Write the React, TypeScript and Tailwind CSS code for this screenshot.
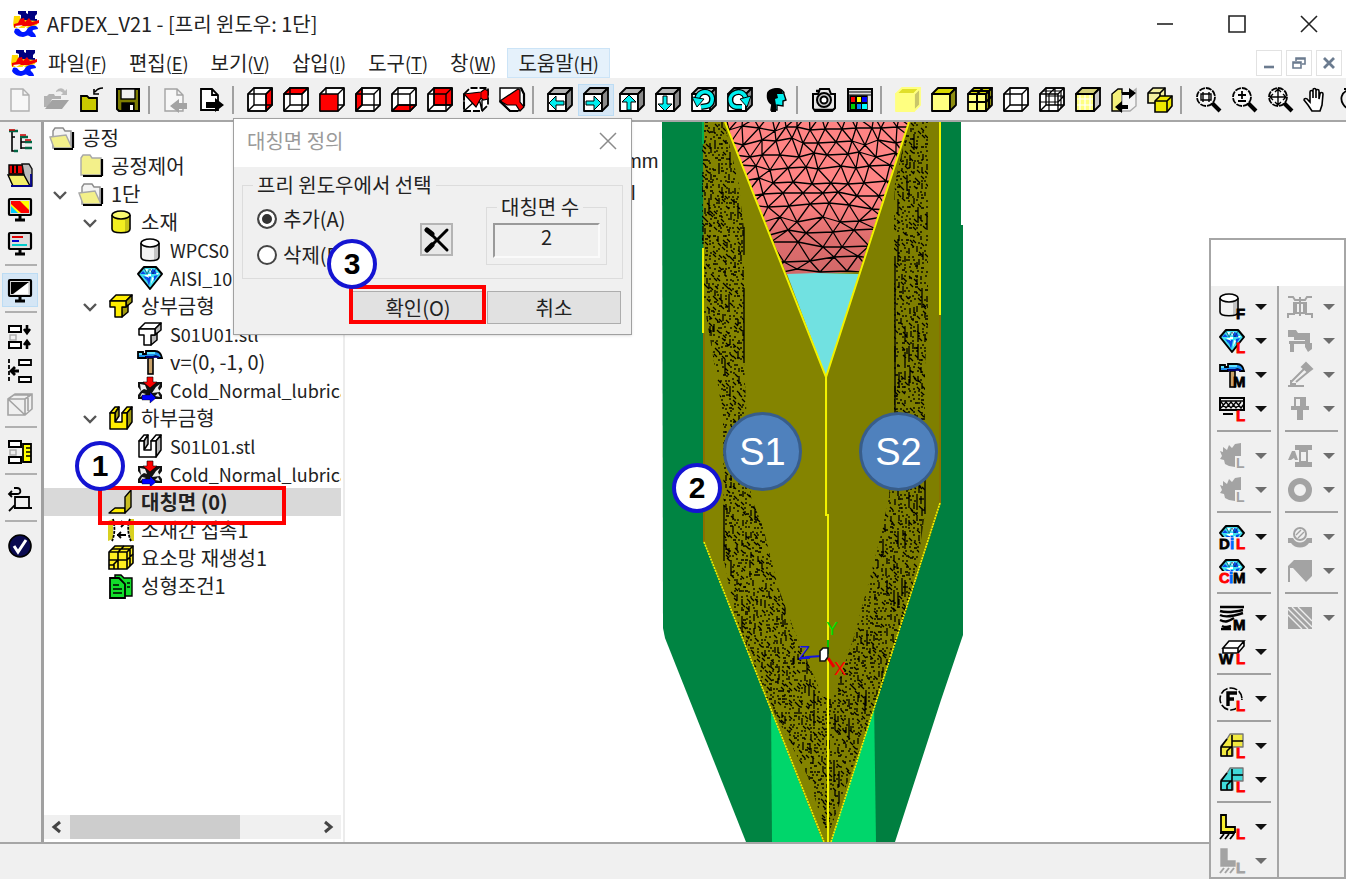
import { FC, ReactNode, useState } from "react";

type IconProps = {
    children: ReactNode;
    size?: number;
}

const Icon: FC<IconProps> = ({ children, size = 26 }) => (
    <svg width={size} height={size} viewBox="0 0 26 26" fill="none" stroke="#000" strokeWidth="1.4" className="shrink-0 overflow-visible" aria-hidden="true">
        {children}
    </svg>
);

type FaceName = "front" | "back" | "left" | "right" | "top" | "bottom";

const FACES: Record<FaceName, string> = {
    front: "1,7 19,7 19,24 1,24",
    back: "7,1 25,1 25,18 7,18",
    left: "1,7 7,1 7,18 1,24",
    right: "19,7 25,1 25,18 19,24",
    top: "1,7 7,1 25,1 19,7",
    bottom: "1,24 7,18 25,18 19,24",
};

const WireCube: FC<{ red?: FaceName }> = ({ red }) => (
    <g strokeLinejoin="round">
        <polygon points="1,7 7,1 25,1 25,18 19,24 1,24" fill="#fff" />
        {red && red !== "front" && <polygon points={FACES[red]} fill="#f00" />}
        <polygon points={FACES.back} />
        <path d="M1 24l6-6" />
        <polygon points={FACES.front} fill={red === "front" ? "#f00" : "none"} />
        <path d="M1 7l6-6M19 7l6-6M19 24l6-6" />
    </g>
);

const SolidCube: FC<{ front: string; top: string; side: string; line?: string }> = ({ front, top, side, line = "#000" }) => (
    <g stroke={line} strokeWidth="1.8" strokeLinejoin="round">
        <polygon points={FACES.front} fill={front} />
        <polygon points={FACES.top} fill={top} />
        <polygon points={FACES.right} fill={side} />
    </g>
);

const ViewCube: FC<{ children: ReactNode }> = ({ children }) => (
    <>
        <SolidCube front="#fff" top="#b5b5b5" side="#8a8a8a" />
        {children}
    </>
);

const Tag: FC<{ x: number; color?: string; children: string }> = ({ x, color = "#000", children }) => (
    <text x={x} y="25" fill={color} stroke={color} strokeWidth="0.8" className="font-['Liberation_Sans',sans-serif] text-[15px] font-bold">
        {children}
    </text>
);

const Diamond = () => (
    <g strokeLinejoin="round">
        <polygon points="7,2 19,2 25,9 13,24 1,9" fill="#3fe0f0" strokeWidth="2" />
        <path d="M3 9l3-3 3 3zM15 4l3 1 2 4h-6zM12 21l-3-9 5 0zM17 11l4-1-4 6zM6 11l3 1 1 4z" fill="#0b49e8" stroke="none" />
        <path d="M8 4h3l-1 3zM12 4h3l-2 4zM7 10h4l1 3zM15 12l2 1-3 6zM19 8l3 0-2 2zM11 9h3v2h-3z" fill="#fff" stroke="none" />
        <path d="M7 3l3 6 3-5 3 5 3-6" stroke="#024" strokeWidth="0.6" />
    </g>
);

const Hammer = () => (
    <g>
        <rect x="11" y="9" width="5" height="16" fill="#c9a26a" strokeWidth="1.6" />
        <path d="M1 3h5v2h3V2h9c4 0 6 2 7 7h-4c-1-2-3-2-5-1H9v1H1z" fill="#1c8ff0" strokeWidth="1.8" />
        <path d="M10 4h8M2 5h3" stroke="#7ff" strokeWidth="1.6" />
        <path d="M9 8h8l5 0" stroke="#008" strokeWidth="1.6" />
    </g>
);

const Cylinder: FC<{ fill: string; top: string }> = ({ fill, top }) => (
    <g strokeWidth="1.6">
        <path d="M4 6v14c0 5 18 5 18 0V6" fill={fill} />
        <path d="M17 10v13l4-2V9z" fill="#00000030" stroke="none" />
        <ellipse cx="13" cy="6" rx="9" ry="4" fill={top} />
    </g>
);

const FolderOpen = () => (
    <g>
        <path d="M4 6l2-3h8l2 3h6v17H4z" fill="#f4f4f4" stroke="#8c8c8c" />
        <path d="M1 12l16-2 6 13H5z" fill="#f3f08a" stroke="#a8a8a8" />
        <path d="M24 7v16M5 24h19" strokeWidth="2.2" />
    </g>
);

const FolderClosed = () => (
    <g>
        <path d="M3 5l2-3h7l2 3h9v17H3z" fill="#f3f08a" stroke="#a8a8a8" />
        <path d="M24 6v17M5 23h19" strokeWidth="2.2" />
    </g>
);

const UpperDie: FC<{ fill: string; side: string }> = ({ fill, side }) => (
    <g strokeWidth="1.5" strokeLinejoin="round">
        <path d="M2 8l6-6h16l-6 6z" fill={fill} />
        <path d="M18 8l6-6v7l-6 5z" fill={side} />
        <path d="M13 14h5l2-2v7l-6 5z" fill={side} />
        <path d="M2 8h16v6h-4v10H7V14H2z" fill={fill} />
    </g>
);

const LowerDie: FC<{ fill: string; side: string }> = ({ fill, side }) => (
    <g strokeWidth="1.5" strokeLinejoin="round">
        <path d="M2 8l5-6h4l-4 6zM14 8l5-6h5l-5 6z" fill={fill} />
        <path d="M7 8l4-6v9l-4 6zM19 8l5-6v15l-5 7z" fill={side} />
        <path d="M2 8h5v9h7V8h5v16H2z" fill={fill} />
    </g>
);

const Friction = () => (
    <g>
        <path d="M1 5h24v5l-3 4 3 4v4H1v-4l3-4-3-4z" fill="#111" stroke="none" />
        <path d="M3 7l5 1 2 5-3-1-3 2zM23 7l-4 3-4 6 8-1-2-4zM3 20l2-4 4 1zM23 20l-2-4-3 3z" fill="#eee" stroke="none" />
        <path d="M10 0h6v5h4l-7 6-7-6h4z" fill="#f00" strokeWidth="0.6" />
        <path d="M5 18h8v-3l6 6-6 5v-3H5z" fill="#00f" strokeWidth="0.4" />
    </g>
);

const Monitor: FC<{ children: ReactNode }> = ({ children }) => (
    <g>
        <rect x="2" y="3" width="22" height="16" rx="1" fill="#ddd" strokeWidth="2.2" />
        {children}
        <path d="M13 19v4M8 24h10" strokeWidth="3" />
    </g>
);

const Logo = () => (
    <g stroke="none">
        <path d="M5 0h8v2l2 1V0h9v3l-2 2v3h2v3H6V9l2-2V4L5 3z" fill="#000080" />
        <path d="M1 5h6l1 6 3-2 14 1-1 4-8 3H1l-1-3z" fill="#ffd900" />
        <path d="M7 8l4-1 1 4 4-4 3 4 7-2v3l-8 3H3l-2 2v-4l4-1z" fill="#f20000" />
        <path d="M2 18c5-2 5 4 9 3s2-5 8-6c4-1 6 1 6 3l-5 1c-2 2 3 3 3 7h-5c-5-3-3-1-8 0-5 0-8-3-9-5z" fill="#0017ff" />
        <path d="M12 16l3-1-4 4zM2 15l8-1-5 3z" fill="#fff" />
    </g>
);

const Magnifier: FC<{ children?: ReactNode }> = ({ children }) => (
    <g>
        <circle cx="11" cy="10" r="9" fill="#f7f7f7" strokeWidth="1.8" strokeDasharray="6 1" />
        <path d="M17 16l8 8" strokeWidth="4" />
        {children}
    </g>
);

const Blocks: FC<{ extra: ReactNode }> = ({ extra }) => (
    <g>
        <rect x="2" y="2" width="12" height="6" fill="#fff" strokeWidth="2" />
        <rect x="2" y="18" width="12" height="6" fill="#fff" strokeWidth="2" />
        {extra}
    </g>
);

const TransparentBlock = <rect x="3" y="11" width="6" height="5" stroke="#aaa" />;

const MeshLump: FC<{ fill: string }> = ({ fill }) => (
    <g strokeLinejoin="round">
        <path d="M2 23V13L8 6l3-5h13v13H14v9z" fill={fill} stroke="#777" />
        <path d="M2 23v-9h11v9zM8 6l-6 8M13 23V2M13 8h11M8 23v-5l5-5" strokeWidth="1.6" />
    </g>
);

const GRAY = "#a3a3a3";

const GrayGear = () => (
    <g stroke="none" fill={GRAY}>
        <path d="M1 8l3 1 0-5 4 3 2-5 3 3 3-4 6-1v13h-6v11l-6-1-4-2-1-4-4-1 2-3z" />
        <text x="17" y="25" className="font-['Liberation_Sans',sans-serif] text-[14px] font-bold">L</text>
    </g>
);

type Tool = {
    label: string;
    icon: ReactNode;
    active?: boolean;
}

const toolGroups: Tool[][] = [
    [
        { label: "새로 만들기", icon: <path d="M4 2h12l6 6v16H4zM16 2v6h6" fill="#f7f7f7" stroke="#b0b0b0" /> },
        {
            label: "열기",
            icon: (
                <g stroke="none" fill={GRAY}>
                    <path d="M1 9h3l2-2h5l1 2h6v3h-9L5 20H1z" opacity=".8" />
                    <path d="M9 13h17l-7 9H2z" />
                    <path d="M13 4c4-4 7-3 9 0l2-2v6h-6l2-2c-2-2-4-2-7-1z" opacity=".7" />
                </g>
            ),
        },
        {
            label: "닫기",
            icon: (
                <g>
                    <path d="M2 9h6l2 2h8v13H2z" fill="#c9c900" strokeWidth="1.8" />
                    <path d="M24 1c-4 0-6 1-8 4M15 2v5h5" strokeWidth="1.6" />
                </g>
            ),
        },
        {
            label: "저장",
            icon: (
                <g>
                    <path d="M2 2h22v22H4l-2-2z" fill="#7c7c00" strokeWidth="2" />
                    <rect x="6" y="2" width="14" height="10" fill="#f0f0f0" />
                    <rect x="7" y="16" width="12" height="8" fill="#000" />
                    <rect x="15" y="18" width="3" height="5" fill="#fff" stroke="none" />
                </g>
            ),
        },
    ],
    [
        {
            label: "가져오기",
            icon: (
                <g stroke={GRAY}>
                    <path d="M2 2h12l6 6v16H2zM14 2v6h6" fill="#f7f7f7" />
                    <path d="M24 16h-8v-4l-9 7 9 7v-4h8z" fill={GRAY} stroke="none" />
                </g>
            ),
        },
        {
            label: "내보내기",
            icon: (
                <g>
                    <path d="M2 2h11l6 6v15H2zM13 2v6h6" fill="#fff" strokeWidth="1.8" />
                    <path d="M7 15h9v-4l9 7-9 7v-4H7z" fill="#000" stroke="none" />
                </g>
            ),
        },
    ],
    [
        { label: "우측면", icon: <WireCube red="right" /> },
        { label: "윗면", icon: <WireCube red="top" /> },
        { label: "정면", icon: <WireCube red="front" /> },
        { label: "좌측면", icon: <WireCube red="left" /> },
        { label: "아랫면", icon: <WireCube red="bottom" /> },
        { label: "뒷면", icon: <WireCube red="back" /> },
        {
            label: "등각 보기",
            icon: (
                <g>
                    <path d="M1 7l6-6h18v17l-6 6H1z" fill="#fff" strokeDasharray="7 2" strokeWidth="1.8" />
                    <path d="M1 7v17M1 24l10-9h6l2 9M19 24V13" />
                    <path d="M1 7l17-2 4-3 3 2v8l-5 1-2-2-5 9z" fill="#f00" strokeWidth="1.2" />
                    <path d="M18 5v6" stroke="#800" />
                </g>
            ),
        },
        {
            label: "역등각 보기",
            icon: (
                <g>
                    <path d="M1 1h21l3 6v12l-6 5h-8L1 15z" fill="#fff" />
                    <path d="M19 2L1 14l7 4h9l4 6 4-4-4-5V3z" fill="#f00" strokeWidth="1.2" />
                    <path d="M1 14l10 10h8M22 1l3 6v12" strokeWidth="2.2" />
                </g>
            ),
        },
    ],
    [
        { label: "왼쪽으로", icon: <ViewCube><path d="M2 16l7-7v5h8v4H9v5z" fill="#0ee" strokeWidth="1" /></ViewCube> },
        { label: "오른쪽으로", active: true, icon: <ViewCube><path d="M18 16l-7-7v5H3v4h8v5z" fill="#0ee" strokeWidth="1" /></ViewCube> },
        { label: "위로", icon: <ViewCube><path d="M10 8l7 7h-5v8H8v-8H3z" fill="#0ee" strokeWidth="1" /></ViewCube> },
        { label: "아래로", icon: <ViewCube><path d="M10 24l7-7h-5V9H8v8H3z" fill="#0ee" strokeWidth="1" /></ViewCube> },
        {
            label: "반시계 회전",
            icon: (
                <ViewCube>
                    <path d="M6 12c1-6 7-9 12-6s4 12-2 13l-6 1" stroke="#000" strokeWidth="6" />
                    <path d="M6 12c1-6 7-9 12-6s4 12-2 13l-6 1" stroke="#0ee" strokeWidth="3.5" />
                    <path d="M1 10l12 2-7 8z" fill="#0ee" strokeWidth="1" />
                </ViewCube>
            ),
        },
        {
            label: "시계 회전",
            icon: (
                <ViewCube>
                    <path d="M19 11C17 5 11 3 6 7s-3 12 3 13h6" stroke="#000" strokeWidth="6" />
                    <path d="M19 11C17 5 11 3 6 7s-3 12 3 13h6" stroke="#0ee" strokeWidth="3.5" />
                    <path d="M24 9l-11 3 7 8z" fill="#0ee" strokeWidth="1" />
                </ViewCube>
            ),
        },
        {
            label: "시점",
            icon: (
                <g>
                    <path d="M12 2c6-1 9 2 9 5l2 6-3 1v5l-6-1v5H8l1-6z" fill="#0ee" />
                    <path d="M4 6c2-5 10-6 15-3l1 4h-6l1 4-3 1 1 6v7H8l1-7c-4-2-6-6-5-12z" fill="#000" stroke="none" />
                </g>
            ),
        },
    ],
    [
        {
            label: "화면 저장",
            icon: (
                <g>
                    <path d="M2 7h5l2-5h9l2 5h4v14l-3 3H4l-2-3z" fill="#e8e8e8" strokeWidth="2" />
                    <circle cx="13" cy="13" r="7" fill="#ccc" strokeWidth="2" />
                    <circle cx="13" cy="13" r="3.5" fill="#fff" strokeWidth="2" />
                    <path d="M4 23h18M5 4h4" strokeWidth="2.5" />
                </g>
            ),
        },
        {
            label: "색상",
            icon: (
                <g>
                    <rect x="1" y="2" width="24" height="22" fill="#ddd" strokeWidth="2" />
                    <path d="M2 5h22M2 8h22" strokeWidth="1.2" />
                    <rect x="3" y="9" width="17" height="14" fill="#000" />
                    <g stroke="none">
                        <path d="M4 10h4v5H4z" fill="#f00" />
                        <path d="M10 10h4v5h-4z" fill="#ff0" />
                        <path d="M15 10h5v5h-5z" fill="#00f" />
                        <path d="M4 17h4v5H4z" fill="#0c0" />
                        <path d="M10 17h4v5h-4z" fill="#08f" />
                        <path d="M15 17h5v5h-5z" fill="#0ff" />
                    </g>
                </g>
            ),
        },
    ],
    [
        { label: "음영", icon: <SolidCube front="#ffff80" top="#e0df2a" side="#c9c66a" line="#ffff80" /> },
        { label: "음영과 모서리", icon: <SolidCube front="#ffff80" top="#d8d800" side="#8d8d10" /> },
        {
            label: "음영과 요소망",
            icon: (
                <g>
                    <SolidCube front="#ffff80" top="#d8d800" side="#8d8d10" />
                    <path d="M10 7v17M1 15h18M10 7l6-6M19 15l6-6M4 4h18v17" strokeWidth="2" />
                </g>
            ),
        },
        { label: "와이어프레임", icon: <WireCube /> },
        {
            label: "와이어 요소망",
            icon: (
                <g>
                    <WireCube />
                    <path d="M10 7v17M1 15h18M10 7l6-6M19 15l6-6M4 4h18v17M16 1v17M7 9h18" strokeWidth="1.2" />
                </g>
            ),
        },
        {
            label: "점 표시",
            icon: (
                <g>
                    <SolidCube front="#ffff80" top="#d5d27a" side="#c8c8c8" />
                    <path d="M5 8v15M10 8v15M15 8v15M2 12h16M2 18h16" stroke="#fff" strokeWidth="1.2" />
                </g>
            ),
        },
        {
            label: "보기 전환",
            icon: (
                <g>
                    <path d="M1 7l6-5h4v22H1z" fill="#f5f17a" />
                    <path d="M11 7h8l6-5v17l-6 5h-8z" fill="#f4f4f4" stroke="#aaa" />
                    <path d="M11 5h7V1l7 5-7 6V8h-7zM17 18h-6v-4l-7 6 7 6v-4h6z" fill="#000" stroke="none" />
                </g>
            ),
        },
        {
            label: "객체 표시",
            icon: (
                <g strokeWidth="1.6">
                    <path d="M1 6l5-5h12v11l-4 4H1z" fill="#f3f0a0" />
                    <path d="M1 6h12v10M13 6l5-5" />
                    <path d="M8 14l5-5h12v10l-5 6H8z" fill="#eee800" />
                    <path d="M8 14h12v11M20 14l5-5" />
                </g>
            ),
        },
    ],
    [
        { label: "영역 확대", icon: <Magnifier><path d="M6 7h10v6H6zM8 5v10M14 5v10" strokeWidth="1.4" /></Magnifier> },
        { label: "확대/축소", icon: <Magnifier><path d="M7 8h8M11 4v8M7 14h8" strokeWidth="1.8" /></Magnifier> },
        { label: "전체 보기", icon: <Magnifier><path d="M3 10h16M11 2v16M6 7l-3 3 3 3M16 7l3 3-3 3M8 5l3-3 3 3M8 15l3 3 3-3" strokeWidth="1.4" /></Magnifier> },
        {
            label: "이동",
            icon: <path d="M9 24l-4-6-4-5c0-2 3-2 4 0l2 2V5c0-2 3-2 3 0v6-8c0-2 3-2 3 0v8-7c0-2 3-2 3 0v8l1-5c0-2 3-2 3 0l-1 11-2 6z" fill="#fff" strokeWidth="1.6" />,
        },
        { label: "회전", icon: <path d="M9 3C2 6 1 12 4 17s10 8 14 5M5 2h6v6" strokeWidth="1.8" /> },
    ],
];

const sideGroups: Tool[][] = [
    [
        {
            label: "트리",
            icon: (
                <g strokeWidth="1.6">
                    <path d="M5 3v20h3M5 9h3M14 10v11M14 14h4M14 20h4" />
                    <path d="M2 3h9M13 9h8M18 14h7M18 20h7M7 23h4" stroke="#064" strokeWidth="2.6" />
                    <path d="M2 2h6M13 7h6M18 12h6" stroke="#c00" />
                </g>
            ),
        },
        {
            label: "라이브러리",
            icon: (
                <g>
                    <path d="M2 3h14v9H2z" fill="#e00" />
                    <path d="M6 3v8M10 3v8" strokeWidth="2" />
                    <path d="M15 2h7l3 5v17h-6z" fill="#bbb" stroke="#111" />
                    <path d="M1 13h16l6 11H6z" fill="#f3ee6a" />
                    <path d="M4 24h20V12" stroke="#008" strokeWidth="1.8" />
                </g>
            ),
        },
        {
            label: "결과",
            icon: (
                <Monitor>
                    <path d="M4 5h18v12H4z" fill="#ff0" stroke="none" />
                    <path d="M4 5h9l9 9v3h-8L4 8z" fill="#f00" stroke="none" />
                    <path d="M4 10l7 7H4z" fill="#0cf" stroke="none" />
                </Monitor>
            ),
        },
        {
            label: "그래프",
            icon: (
                <Monitor>
                    <path d="M5 7h11" stroke="#d00" strokeWidth="2" />
                    <path d="M5 11h7" stroke="#00c" strokeWidth="2" />
                    <path d="M5 15h15" stroke="#0cc" strokeWidth="2" />
                </Monitor>
            ),
        },
    ],
    [
        {
            label: "배경",
            active: true,
            icon: (
                <Monitor>
                    <path d="M4 5h18L6 17H4z" fill="#000" stroke="none" />
                    <path d="M21 6v11H7z" fill="#fff" stroke="none" />
                </Monitor>
            ),
        },
    ],
    [
        { label: "간격 맞춤", icon: <Blocks extra={<>{TransparentBlock}<path d="M20 1v6M17 5l3 4 3-4M20 25v-6M17 21l3-4 3 4" strokeWidth="2.6" /></>} /> },
        {
            label: "왼쪽 이동",
            icon: (
                <g>
                    <path d="M2 1v24" strokeWidth="1.8" strokeDasharray="4 2" />
                    <path d="M12 2h12v5H12zM12 19h12v5H12z" fill="#fff" strokeWidth="1.8" />
                    <path d="M12 13H5M8 9l-4 4 4 4" strokeWidth="2.8" />
                </g>
            ),
        },
        {
            label: "단면",
            icon: (
                <g stroke={GRAY} strokeWidth="1.6">
                    <path d="M1 7l7-5h17v15l-7 6H1zM1 7h17v16M18 7l7-5M1 7l17 16M7 3h14v16" fill="none" />
                </g>
            ),
        },
    ],
    [
        { label: "치수", icon: <Blocks extra={<>{TransparentBlock}<path d="M16 5h8v18h-8z" fill="#ff0" strokeWidth="1.8" /><path d="M19 9h5M19 13h5M19 17h5" /></>} /> },
    ],
    [
        {
            label: "되돌리기",
            icon: (
                <g strokeWidth="1.8">
                    <path d="M8 11h14v11H8zM8 19l-6 6M7 22h18" />
                    <path d="M2 8h8c5 0 4-6 0-6H7M5 5L2 8l3 3" />
                </g>
            ),
        },
    ],
    [
        {
            label: "확인",
            icon: (
                <g>
                    <circle cx="13" cy="13" r="11" fill="#0a0a50" strokeWidth="1.6" />
                    <path d="M7 13l4 6 8-12" stroke="#fff" strokeWidth="3" />
                </g>
            ),
        },
    ],
];

type TreeItem = {
    level: 0 | 1 | 2 | 3;
    label: string;
    icon: ReactNode;
    open?: boolean;
    file?: boolean;
}

const treeItems: TreeItem[] = [
    { level: 0, label: "공정", icon: <FolderOpen /> },
    { level: 1, label: "공정제어", icon: <FolderClosed /> },
    { level: 1, label: "1단", icon: <FolderOpen />, open: true },
    { level: 2, label: "소재", icon: <Cylinder fill="#f2ee20" top="#fafa70" />, open: true },
    { level: 3, label: "WPCS0", icon: <Cylinder fill="#f2f2f2" top="#fff" />, file: true },
    { level: 3, label: "AISI_10", icon: <Diamond />, file: true },
    { level: 2, label: "상부금형", icon: <UpperDie fill="#ffee00" side="#a09a10" />, open: true },
    { level: 3, label: "S01U01.stl", icon: <UpperDie fill="#fff" side="#b8b8b8" />, file: true },
    { level: 3, label: "v=(0, -1, 0)", icon: <Hammer /> },
    { level: 3, label: "Cold_Normal_lubrica", icon: <Friction />, file: true },
    { level: 2, label: "하부금형", icon: <LowerDie fill="#ffee00" side="#a09a10" />, open: true },
    { level: 3, label: "S01L01.stl", icon: <LowerDie fill="#fff" side="#b8b8b8" />, file: true },
    { level: 3, label: "Cold_Normal_lubrica", icon: <Friction />, file: true },
    {
        level: 2,
        label: "대칭면 (0)",
        icon: (
            <g strokeLinejoin="round">
                <path d="M1 24l6-5h10v5z" fill="#ffee00" />
                <path d="M17 24V8l6-7v17z" fill="#c9bd20" />
            </g>
        ),
    },
    {
        level: 2,
        label: "소재간 접촉1",
        icon: (
            <g>
                <path d="M0 4l5-2v20l-5 2zM26 2h-4l-1 10 2 12h3z" fill="#d8d020" stroke="none" />
                <path d="M5 2c2 6 2 16-1 22M22 2c-3 6-2 16 1 22" strokeDasharray="3 1" strokeWidth="1.8" />
                <path d="M8 7h9M13 4l3 3-3 3M18 18H9M13 15l-3 3 3 3" strokeWidth="1.8" />
            </g>
        ),
    },
    {
        level: 2,
        label: "요소망 재생성1",
        icon: (
            <g strokeWidth="1.6">
                <path d="M1 7l6-6h18v17l-6 6H1z" fill="#ffee20" />
                <path d="M1 7h18v17M19 7l6-6M10 24V7l6-6M1 15h18l6-6M4 4h18v17M1 20h5v4M5 20l5-5" />
            </g>
        ),
    },
    {
        level: 2,
        label: "성형조건1",
        icon: (
            <g fill="#12dd2a">
                <path d="M7 2h6l3 3h8v18H7z" />
                <path d="M2 5h9l6 6v14H2z" strokeWidth="1.8" />
                <path d="M5 12h6M5 16h9M5 20h9M19 10h3M19 14h3" />
            </g>
        ),
    },
];

const INDENT = ["pl-[5px]", "pl-[9px]", "pl-[39px]", "pl-[68px]"];

const menus = [
    ["파일", "F"],
    ["편집", "E"],
    ["보기", "V"],
    ["삽입", "I"],
    ["도구", "T"],
    ["창", "W"],
    ["도움말", "H"],
];

type PaletteTool = {
    label: string;
    icon: ReactNode;
    disabled?: boolean;
}

const paletteLeft: PaletteTool[][] = [
    [
        { label: "소재 형상", icon: <><g transform="translate(-3 -2)"><Cylinder fill="#f2f2f2" top="#fff" /></g><Tag x={17}>F</Tag></> },
        { label: "소재 물성", icon: <><Diamond /><Tag x={17} color="#f00">L</Tag></> },
        { label: "금형 속도", icon: <><Hammer /><Tag x={14}>M</Tag></> },
        {
            label: "마찰 조건",
            icon: (
                <g>
                    <path d="M1 2h24v12H1z" fill="#eee" strokeWidth="2" />
                    <path d="M1 5h24M2 12l5-6 5 6 5-6 5 6 3-4M2 6l5 6 5-6 5 6 5-6" />
                    <path d="M4 18h10" strokeWidth="2" />
                    <Tag x={17} color="#f00">L</Tag>
                </g>
            ),
        },
    ],
    [
        { label: "열 조건", icon: <GrayGear />, disabled: true },
        { label: "접촉 열", icon: <GrayGear />, disabled: true },
    ],
    [
        { label: "금형 물성", icon: <><Diamond /><path d="M0 13h26v13H0z" fill="#f0f0f0" stroke="none" /><Tag x={0}>D</Tag><Tag x={11} color="#06f">i</Tag><Tag x={17} color="#f00">L</Tag></> },
        { label: "금형 모델", icon: <><Diamond /><path d="M0 13h26v13H0z" fill="#f0f0f0" stroke="none" /><Tag x={0} color="#f00">C</Tag><Tag x={10} color="#06f">i</Tag><Tag x={14}>M</Tag></> },
    ],
    [
        {
            label: "스프링",
            icon: (
                <g>
                    <path d="M1 2h24M1 6c6 2 14 1 23-1M1 10c6 3 14 1 23-2M1 15c6 3 9 1 14-2M3 21c4 2 6 1 9 0M2 24h10" strokeWidth="2.4" />
                    <Tag x={14}>M</Tag>
                </g>
            ),
        },
        {
            label: "공작물",
            icon: (
                <g>
                    <path d="M4 9l6-7h15l-6 7zM4 9v5h15V9M19 14l6-7V2" fill="#fff" strokeWidth="1.6" />
                    <Tag x={0}>W</Tag>
                    <Tag x={17} color="#f00">L</Tag>
                </g>
            ),
        },
    ],
    [
        {
            label: "하중",
            icon: (
                <g>
                    <circle cx="12" cy="13" r="11" strokeDasharray="8 2" strokeWidth="1.6" />
                    <path d="M9 20V7h9M9 13h6" strokeWidth="3.4" />
                    <path d="M17 14h9v12h-9z" fill="#f0f0f0" stroke="none" />
                    <Tag x={17} color="#f00">L</Tag>
                </g>
            ),
        },
    ],
    [
        { label: "소재 요소망", icon: <><MeshLump fill="#f2ea40" /><Tag x={17} color="#f00">L</Tag></> },
        { label: "금형 요소망", icon: <><MeshLump fill="#40dada" /><Tag x={17} color="#f00">L</Tag></> },
    ],
    [
        {
            label: "고정 조건",
            icon: (
                <g>
                    <path d="M2 1h5v12h9v5H2z" fill="#f7ee30" strokeWidth="1.8" />
                    <path d="M1 25l4-5M6 25l4-5M11 25l4-5M1 19h15" strokeWidth="1.8" />
                    <Tag x={17} color="#f00">L</Tag>
                </g>
            ),
        },
        {
            label: "지지 조건",
            disabled: true,
            icon: (
                <g stroke={GRAY} fill={GRAY}>
                    <path d="M2 1h6v12h8v5H2z" />
                    <path d="M1 25l4-5M6 25l4-5M11 25l4-5" strokeWidth="2" />
                    <Tag x={17} color={GRAY}>L</Tag>
                </g>
            ),
        },
    ],
];

const paletteRight: PaletteTool[][] = [
    [
        { label: "압출", disabled: true, icon: <g stroke={GRAY} strokeWidth="2"><path d="M1 3h5l2 3h10l2-3h5M7 9h12v10H7zM13 3v19M9 9v10M17 9v10M1 24v-4h7M25 24v-4h-7" /></g> },
        { label: "프레스", disabled: true, icon: <g stroke="none" fill={GRAY}><path d="M1 2h8l2 3h12v10h2v6l-4 3-3-5V12H7v-3H1zM2 13h18v3H7v8H3v-8H2z" /></g> },
        { label: "전단", disabled: true, icon: <g stroke={GRAY} strokeWidth="2"><path d="M17 7L4 20M21 10L9 20M4 18v4h5M1 24h16" /><path d="M19 1l6 6-4 3-6-5z" fill={GRAY} /></g> },
        { label: "펀치", disabled: true, icon: <g stroke={GRAY} strokeWidth="2"><path d="M8 2h10v9H8zM4 12h18" /><path d="M4 10h18v4H4zM10 14h6v10h-6zM13 2h5v9h-5z" fill={GRAY} stroke="none" /></g> },
    ],
    [
        { label: "단조", disabled: true, icon: <g fill={GRAY} stroke="none"><path d="M8 2h17v5h-4v12h4v5H8v-5h4V7H8zM1 17l4-9h3l3 9H8l-1-2-3 2zM14 9v9h5V9z" fillRule="evenodd" /></g> },
        { label: "링 압연", disabled: true, icon: <circle cx="13" cy="13" r="9" stroke={GRAY} strokeWidth="6" /> },
    ],
    [
        { label: "굽힘", disabled: true, icon: <g stroke={GRAY} strokeWidth="2"><circle cx="13" cy="10" r="6" /><path d="M9 11l5-5M11 14l6-6" strokeWidth="1.4" /><path d="M1 14h5c3 6 11 6 14 0h5v5h-3c-4 6-14 6-18 0H1z" fill={GRAY} stroke="none" /></g> },
        { label: "모따기", disabled: true, icon: <path d="M1 24V8l6-6h18v16l-6 6L6 10H3v14z" fill={GRAY} stroke="none" /> },
    ],
    [
        { label: "해칭", disabled: true, icon: <g><path d="M1 2h24v22H1z" fill={GRAY} stroke="none" /><path d="M1 4l20 20M5 2l20 20M1 10l14 14M11 2l14 14" stroke="#eee" /></g> },
    ],
];

// small linear congruential generator, keeps the mesh identical on every render
const createRandom = (seed: number) => {
    let value = seed;
    return () => {
        value = (value * 48271) % 2147483647;
        return value / 2147483647;
    };
};

const buildSpeckles = () => {
    const random = createRandom(7919);
    let d = "";
    for (let y = 122; y < 842; y += 4) {
        for (let x = 700; x < 942; x += 4) {
            const r = random();
            if (r < 0.1) continue;
            const px = x + Math.floor(random() * 3);
            const py = y + Math.floor(random() * 3);
            if (r > 0.985) d += `M${px} ${py}v16`;
            else if (r > 0.9) d += `M${px} ${py}v6`;
            else if (r > 0.72) d += `M${px} ${py}l3 3`;
            else if (r > 0.6) d += `M${px} ${py}h3`;
            else d += `M${px} ${py}v2`;
        }
    }
    return d;
};

const buildTriangles = () => {
    const random = createRandom(4242);
    const rows: number[][][] = [];
    for (let r = 0; r < 13; r++) {
        const step = 13 + r;
        const row: number[][] = [];
        for (let c = 0; c < 18; c++) {
            row.push([
                Math.round(816 + (c - 9 + (r % 2) / 2) * step + random() * 7),
                Math.round(112 + r * 13 + random() * 7),
            ]);
        }
        rows.push(row);
    }
    let d = "";
    rows.forEach((row, r) => {
        row.forEach(([x, y], c) => {
            if (row[c + 1]) d += `M${x} ${y}L${row[c + 1][0]} ${row[c + 1][1]}`;
            const next = rows[r + 1];
            if (!next) return;
            const other = r % 2 ? c + 1 : c - 1;
            d += `M${x} ${y}L${next[c][0]} ${next[c][1]}`;
            if (next[other]) d += `M${x} ${y}L${next[other][0]} ${next[other][1]}`;
        });
    });
    return d;
};

const SPECKLES = buildSpeckles();
const TRIANGLES = buildTriangles();

const Model = () => (
    <svg width="1002" height="720" viewBox="344 122 1002 720" className="block shrink-0" role="img" aria-label="3D">
        <defs>
            <clipPath id="mesh">
                <path d="M701 122h22l15 63 2 20 3 23v135l2 40 5 94 12 30 15 60 16 43 29 67h10l20-57 18-66 10-40 8-37 5-75V208l1-26 14-60h19v206l-3 37v148l-11 74-15 46-18 57-23 63-28 77h-5l-17-53-44-84-30-80-10-53-1-145-17-100-4-5z" />
            </clipPath>
            <clipPath id="work">
                <path d="M724 122h184l-50 150-72 3z" />
            </clipPath>
            <linearGradient id="pink" x1="0" y1="0" x2="0" y2="1">
                <stop offset="0.5" stopColor="#ff8484" />
                <stop offset="0.75" stopColor="#df6e6e" />
                <stop offset="1" stopColor="#d26868" />
            </linearGradient>
        </defs>
        <path d="M661 122h167v720h-83L664 638l-2-10z" fill="#008442" />
        <path d="M827 122h133v103h2v410l-22 65-46 142h-67z" fill="#007f40" />
        <path d="M770 700h103l2 142H771z" fill="#00d66b" />
        <path d="M702 122h125v720h-5L703 542z" fill="#848400" />
        <path d="M827 122h113v381L830 842h-3z" fill="#7f7f00" />
        <path d="M703 333v209M939 315v188" stroke="#8a7000" strokeWidth="2" />
        <path d={SPECKLES} clipPath="url(#mesh)" stroke="#000" strokeWidth="1.3" fill="none" />
        <path d="M743 227v28M743 288v75M723 505v56M894 258v157M924 480v34" stroke="#000" strokeWidth="1.3" />
        <path d="M724 122h184l-50 150-72 3z" fill="url(#pink)" />
        <path d={TRIANGLES} clipPath="url(#work)" stroke="#000" strokeWidth="1.3" fill="none" />
        <path d="M786 274l30-1 42 1-33 103z" fill="#71e1e1" />
        <g stroke="#f2f200" fill="none">
            <path d="M724 122l101 255 83-255" strokeWidth="2" />
            <path d="M825 375v140h2v327" strokeWidth="2" />
            <path d="M702 248v85M939 122v193" strokeWidth="2" />
            <path d="M703 542l120 300M939 503L830 842" strokeWidth="1.6" strokeDasharray="2 1" />
        </g>
        <path d="M702 122v22" stroke="#00b050" strokeWidth="2" />
        <path d="M827 640v14" stroke="#00c800" strokeWidth="2" />
        <path d="M821 656l-15 1M798 659l8-2h5" stroke="#1414e0" strokeWidth="2" />
        <path d="M827 658l6 9" stroke="#e00" strokeWidth="3" />
        <path d="M819 651l3-3h5v9l-3 4h-5z" fill="#fff" stroke="#111" strokeWidth="1.6" />
        <g className="font-['Liberation_Sans',sans-serif] text-[18px]">
            <text x="825" y="635" fill="#00e000">Y</text>
            <text x="798" y="659" fill="#1414e0">Z</text>
            <text x="833" y="675" fill="#f00">X</text>
        </g>
        <g className="font-['Liberation_Sans',sans-serif] text-[20px]" fill="#222">
            <text x="624" y="168">mm</text>
            <text x="630" y="200">l</text>
        </g>
    </svg>
);

const IconButton: FC<{ tool: Tool; className: string }> = ({ tool, className }) => (
    <button
        type="button"
        aria-label={tool.label}
        className={`${className} flex shrink-0 items-center justify-center border ${tool.active ? "border-[#bcdcf4] bg-[#d5e6f5]" : "border-transparent hover:bg-[#e0edf8]"}`}
    >
        <Icon>{tool.icon}</Icon>
    </button>
);

const PaletteColumn: FC<{ groups: PaletteTool[][] }> = ({ groups }) => (
    <div className="flex flex-1 flex-col pt-1">
        {groups.map((group, i) => (
            <div key={i}>
                {i > 0 && <div className="mx-1.5 mt-1 mb-[7px] h-0.5 bg-[#a0a0a0]" />}
                {group.map((tool) => (
                    <button
                        key={tool.label}
                        type="button"
                        aria-label={tool.label}
                        disabled={tool.disabled}
                        className="flex h-[34px] w-full items-center gap-2.5 pl-2"
                    >
                        <Icon>{tool.icon}</Icon>
                        <svg width="12" height="6" viewBox="0 0 12 6" fill={tool.disabled ? "#6d6d6d" : "#111"} aria-hidden="true">
                            <path d="M0 0h12L6 6z" />
                        </svg>
                    </button>
                ))}
            </div>
        ))}
    </div>
);

const SymmetryDialog = () => {
    const [mode, setMode] = useState("add");

    return (
        <section role="dialog" aria-label="대칭면 정의" className="absolute top-[118px] left-[233px] z-20 w-[399px] border border-[#a0a0a0] bg-[#f0f0f0] shadow-sm">
            <header className="flex h-12 items-center justify-between bg-white pr-3.5 pb-1 pl-[13px] text-[#9a9a9a]">
                <h2>대칭면 정의</h2>
                <button type="button" aria-label="닫기">
                    <svg width="18" height="18" viewBox="0 0 18 18" stroke="#8a8a8a" strokeWidth="1.5" aria-hidden="true">
                        <path d="M1 1l16 16M17 1L1 17" />
                    </svg>
                </button>
            </header>
            <div className="px-2 pt-1 pb-2.5">
                <fieldset className="border border-[#dcdcdc] pr-[15px] pl-2.5">
                    <legend className="px-1 leading-7">프리 윈도우에서 선택</legend>
                    <div className="flex items-start">
                        <div className="flex flex-col gap-2 pt-1.5 pb-[9px] pl-1">
                            {[["add", "추가(A)"], ["remove", "삭제(D)"]].map(([value, label]) => (
                                <label key={value} className="flex items-center gap-1.5">
                                    <input
                                        type="radio"
                                        name="mode"
                                        value={value}
                                        checked={mode === value}
                                        onChange={() => setMode(value)}
                                        className="size-5 appearance-none rounded-full border-2 border-[#444] bg-white checked:bg-[#333] checked:shadow-[inset_0_0_0_3px_white]"
                                    />
                                    {label}
                                </label>
                            ))}
                        </div>
                        <button type="button" aria-label="선택 지우기" className="mt-6 ml-auto flex size-[33px] items-center justify-center border-2 border-[#b4b4b4] bg-[#e8e8e8]">
                            <svg width="26" height="26" viewBox="0 0 26 26" stroke="#000" strokeLinecap="round" aria-hidden="true">
                                <path d="M3 3l20 20" strokeWidth="3" />
                                <path d="M3 23L23 3" strokeWidth="3" />
                                <path d="M3 23l5-5M3 3l5 4" strokeWidth="5" />
                            </svg>
                        </button>
                        <fieldset className="ml-[33px] w-[121px] border border-[#dcdcdc] px-1.5 pb-1.5">
                            <legend className="ml-1 px-1 leading-4">대칭면 수</legend>
                            <output className="mt-2 block h-[35px] border-2 border-[#fafafa] border-t-[#9a9a9a] border-l-[#9a9a9a] text-center leading-6">2</output>
                        </fieldset>
                    </div>
                </fieldset>
                <div className="mt-3 flex justify-end gap-0.5 pr-0.5">
                    <button type="button" className="h-[33px] w-[134px] border border-[#adadad] bg-[#e1e1e1] leading-7">확인(O)</button>
                    <button type="button" className="h-[33px] w-[134px] border border-[#adadad] bg-[#e1e1e1] leading-7">취소</button>
                </div>
            </div>
        </section>
    );
};

const StepBadge: FC<{ step: number; position: string }> = ({ step, position }) => (
    <div className={`absolute z-30 flex size-[50px] items-center justify-center rounded-full border-4 border-[#1414d2] bg-white font-['Liberation_Sans',sans-serif] text-[30px] font-bold text-black ${position}`}>
        {step}
    </div>
);

const PlaneBadge: FC<{ name: string; position: string }> = ({ name, position }) => (
    <div className={`absolute z-10 flex size-[79px] items-center justify-center rounded-full border-3 border-[#385d8a] bg-[#4f81bd] font-['Liberation_Sans',sans-serif] text-[38px] text-white ${position}`}>
        {name}
    </div>
);

export default function App() {
    const [selected, setSelected] = useState(13);

    return (
        <div className="relative flex min-h-screen flex-col overflow-hidden bg-[#f0f0f0] font-['Noto_Sans_CJK_KR',sans-serif] text-[20px] leading-7 text-[#222]">
            <header className="flex h-12 items-center bg-white pl-[13px]">
                <Icon>
                    <Logo />
                </Icon>
                <h1 className="ml-2">AFDEX_V21 - [프리 윈도우: 1단]</h1>
                <div className="ml-auto flex items-center gap-[54px] pr-7">
                    <button type="button" aria-label="최소화">
                        <svg width="18" height="18" viewBox="0 0 18 18" stroke="#222" strokeWidth="1.6"><path d="M1 9h16" /></svg>
                    </button>
                    <button type="button" aria-label="최대화">
                        <svg width="18" height="18" viewBox="0 0 18 18" fill="none" stroke="#222" strokeWidth="1.6"><path d="M1 1h16v16H1z" /></svg>
                    </button>
                    <button type="button" aria-label="창 닫기">
                        <svg width="18" height="18" viewBox="0 0 18 18" stroke="#222" strokeWidth="1.6"><path d="M1 1l16 16M17 1L1 17" /></svg>
                    </button>
                </div>
            </header>

            <nav className="flex h-[30px] items-center bg-white pr-1 pl-[11px]">
                <Icon>
                    <Logo />
                </Icon>
                {menus.map(([label, key]) => (
                    <button
                        key={key}
                        type="button"
                        className={`h-[30px] border px-2.5 ${key === "H" ? "border-[#cce4f7] bg-[#e5f1fb]" : "border-transparent"}`}
                    >
                        {label}
                        <span className="text-lg leading-6">(<span className="underline underline-offset-2">{key}</span>)</span>
                    </button>
                ))}
                <div className="ml-auto flex gap-1">
                    <button type="button" aria-label="문서 최소화" className="flex size-[26px] items-center justify-center border border-[#e2e2e2]">
                        <svg width="14" height="14" viewBox="0 0 14 14" stroke="#6b7b8f" strokeWidth="2.6"><path d="M2 11h10" /></svg>
                    </button>
                    <button type="button" aria-label="문서 복원" className="flex size-[26px] items-center justify-center border border-[#e2e2e2]">
                        <svg width="14" height="14" viewBox="0 0 14 14" fill="none" stroke="#6b7b8f" strokeWidth="1.6"><path d="M1 6h8v6H1zM4 5V2h9v6h-3M1 7h8M4 3h9" /></svg>
                    </button>
                    <button type="button" aria-label="문서 닫기" className="flex size-[26px] items-center justify-center border border-[#e2e2e2]">
                        <svg width="14" height="14" viewBox="0 0 14 14" stroke="#6b7b8f" strokeWidth="2.8"><path d="M2 2l10 10M12 2L2 12" /></svg>
                    </button>
                </div>
            </nav>

            <div className="flex h-11 items-center overflow-hidden border-b-2 border-[#a6a6a6] pt-0.5 pl-0.5">
                {toolGroups.map((group, i) => (
                    <div key={i} className="flex shrink-0 items-center">
                        {i > 0 && <div className="mr-2 ml-0.5 h-7 w-0.5 bg-[#a0a0a0]" />}
                        {group.map((tool) => (
                            <IconButton key={tool.label} tool={tool} className="h-8 w-9" />
                        ))}
                    </div>
                ))}
            </div>

            <main className="flex flex-1 overflow-hidden border-b-2 border-[#a6a6a6]">
                <div className="w-[41px] shrink-0 pt-0.5">
                    {sideGroups.map((group, i) => (
                        <div key={i}>
                            {i > 0 && <div className="mt-1 mr-1 mb-[7px] ml-[5px] h-0.5 bg-[#b0b0b0]" />}
                            {group.map((tool) => (
                                <IconButton key={tool.label} tool={tool} className="ml-0.5 h-[34px] w-9" />
                            ))}
                        </div>
                    ))}
                </div>

                <aside className="flex w-[304px] shrink-0 flex-col border-r-2 border-l-3 border-r-[#ececec] border-l-[#a0a0a0] bg-white pt-0.5 pr-0.5 pb-[3px]">
                    <ul>
                        {treeItems.map((item, i) => (
                            <li key={i}>
                                <button
                                    type="button"
                                    onClick={() => setSelected(i)}
                                    className={`flex h-7 w-full items-center overflow-hidden whitespace-nowrap ${INDENT[item.level]} ${selected === i ? "bg-[#d9d9d9] font-bold" : ""}`}
                                >
                                    {item.level > 0 && (
                                        <svg width="14" height="14" viewBox="0 0 14 14" fill="none" stroke="#555" strokeWidth="2.4" className="mr-[11px] shrink-0" aria-hidden="true">
                                            {item.open && <path d="M1 5l6 6 6-6" />}
                                        </svg>
                                    )}
                                    <Icon>{item.icon}</Icon>
                                    <span className={`ml-[7px] ${item.file ? "text-lg leading-7" : ""}`}>{item.label}</span>
                                </button>
                            </li>
                        ))}
                    </ul>
                    <div className="mt-auto flex h-6 items-center bg-[#f0f0f0]">
                        <svg width="26" height="16" viewBox="0 0 26 16" fill="none" stroke="#444" strokeWidth="3" aria-hidden="true"><path d="M16 3l-6 5 6 5" /></svg>
                        <div className="h-6 w-[170px] bg-[#cdcdcd]" />
                        <svg width="26" height="16" viewBox="0 0 26 16" fill="none" stroke="#444" strokeWidth="3" className="ml-auto" aria-hidden="true"><path d="M10 3l6 5-6 5" /></svg>
                    </div>
                </aside>

                <div className="flex flex-1 overflow-hidden bg-white">
                    <Model />
                </div>
            </main>

            <footer className="h-[35px]" />

            <SymmetryDialog />

            <aside className="absolute top-[238px] right-0 bottom-0 z-10 flex w-[137px] flex-col border-2 border-[#a6a6a6] bg-[#f0f0f0]">
                <div className="h-[46px] shrink-0 bg-white" />
                <div className="flex flex-1 overflow-hidden">
                    <PaletteColumn groups={paletteLeft} />
                    <div className="w-0.5 bg-[#a6a6a6]" />
                    <PaletteColumn groups={paletteRight} />
                </div>
            </aside>

            <PlaneBadge name="S1" position="top-[412px] left-[723px]" />
            <PlaneBadge name="S2" position="top-[412px] left-[859px]" />

            <div className="absolute top-[486px] left-[98px] z-20 h-[39px] w-[188px] border-4 border-[#f00]" />
            <div className="absolute top-[285px] left-[349px] z-20 h-[39px] w-[137px] border-4 border-[#f00]" />
            <StepBadge step={1} position="top-[441px] left-[75px]" />
            <StepBadge step={2} position="top-[463px] left-[672px]" />
            <StepBadge step={3} position="top-[239px] left-[327px]" />
        </div>
    );
}
